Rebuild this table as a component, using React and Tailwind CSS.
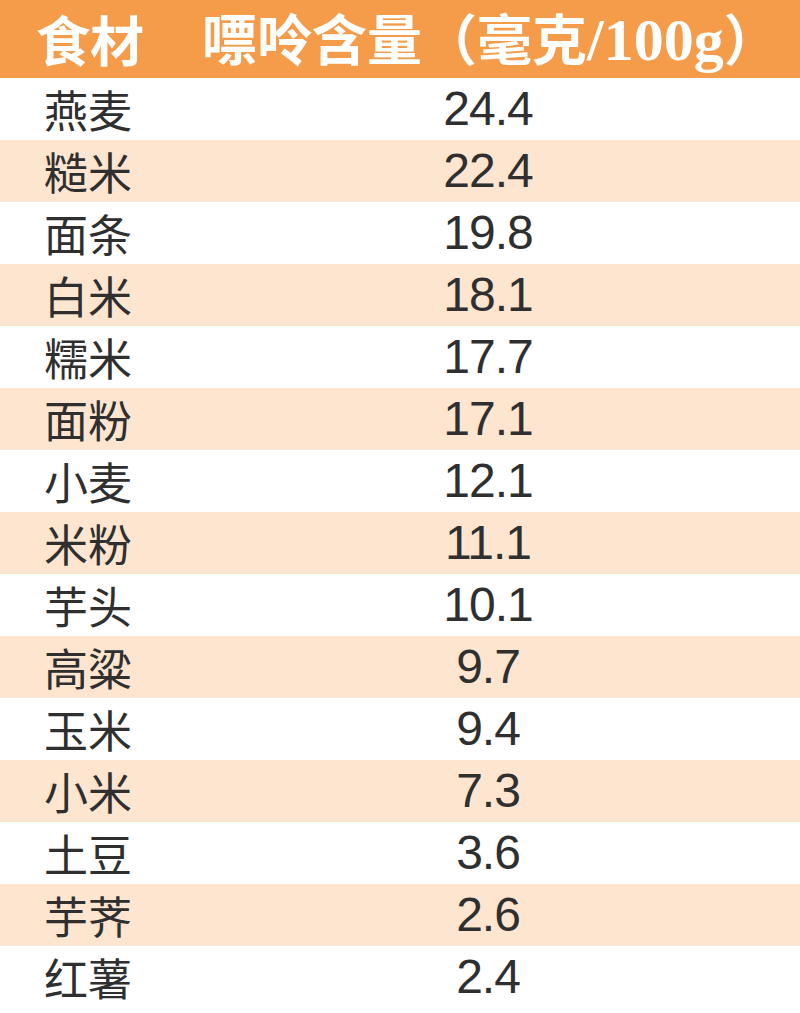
import React from 'react';

const rows = [
  { name: '燕麦', value: '24.4' },
  { name: '糙米', value: '22.4' },
  { name: '面条', value: '19.8' },
  { name: '白米', value: '18.1' },
  { name: '糯米', value: '17.7' },
  { name: '面粉', value: '17.1' },
  { name: '小麦', value: '12.1' },
  { name: '米粉', value: '11.1' },
  { name: '芋头', value: '10.1' },
  { name: '高粱', value: '9.7' },
  { name: '玉米', value: '9.4' },
  { name: '小米', value: '7.3' },
  { name: '土豆', value: '3.6' },
  { name: '芋荠', value: '2.6' },
  { name: '红薯', value: '2.4' },
];

const cjk = "font-['Noto_Sans_CJK_SC',sans-serif]";

const App = () => {
  return (
    <div className="w-[800px] h-[1013px] bg-white overflow-hidden">
      {/* Header */}
      <div className="grid grid-cols-[190px_1fr] h-[78px] items-center bg-[#f49c49] text-white font-bold">
        <div className={`pl-[36px] text-[54px] leading-[1.2] ${cjk}`}>食材</div>
        <div className={`pl-[12px] text-[55px] leading-[1.2] whitespace-nowrap ${cjk}`}>
          嘌呤含量（毫克
          <span className="font-['Liberation_Serif',serif] text-[60px]">/100g</span>
          ）
        </div>
      </div>

      {/* Rows */}
      {rows.map((row, index) => (
        <div
          key={row.name}
          className={`grid grid-cols-[190px_1fr] h-[62px] items-center ${
            index % 2 === 1 ? 'bg-[#fde5cf]' : 'bg-white'
          }`}
        >
          <div className={`pl-[44px] text-[44px] leading-[1.2] text-[#2f2f2f] ${cjk}`}>
            {row.name}
          </div>
          <div className="pr-[14px] text-center text-[48px] leading-[1.2] tracking-[-1px] text-[#2f2f2f] font-['Liberation_Sans',sans-serif]">
            {row.value}
          </div>
        </div>
      ))}
    </div>
  );
};

export default App;
